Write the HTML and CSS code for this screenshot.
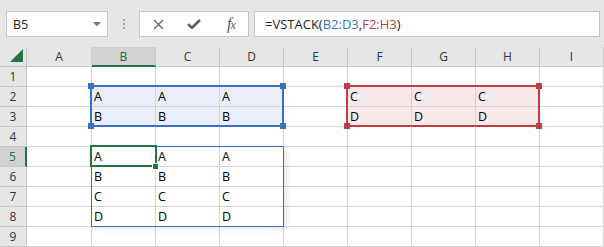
FILE: index.html
```html
<!DOCTYPE html>
<html>
<head>
<meta charset="utf-8">
<link rel="stylesheet" href="styles.css">
</head>
<body>
<div class="toolbar">
  <div class="namebox">
    <span class="nb-text">B5</span>
    <svg class="caret" width="8" height="5" viewBox="0 0 8 5"><path d="M0 0H8L4 4.5Z" fill="#7a7a7a"/></svg>
  </div>
  <div class="sep"><i></i><i></i><i></i></div>
  <div class="fbuttons">
    <span class="fbtn"><svg width="11" height="11" viewBox="0 0 11 11"><path d="M1 1L10 10M10 1L1 10" stroke="#6f6f6f" stroke-width="1.5"/></svg></span>
    <span class="fbtn"><svg width="14" height="10" viewBox="0 0 14 10"><path d="M1 5.2L5 8.8L13 1" stroke="#5e5e5e" stroke-width="2.6" fill="none"/></svg></span>
    <span class="fbtn fx"><i>f</i><i class="x">x</i></span>
  </div>
  <div class="formula">=VSTACK(<span class="rb">B2:D3</span>,<span class="rr">F2:H3</span>)</div>
</div>

<div class="sheet">
  <div class="grid">
    <div class="corner"><svg width="14" height="14" viewBox="0 0 14 14"><path d="M0 13H13V0Z" fill="#217346"/></svg></div>
    <div class="h">A</div><div class="h sel-h">B</div><div class="h">C</div><div class="h">D</div><div class="h">E</div><div class="h">F</div><div class="h">G</div><div class="h">H</div><div class="h">I</div>

    <div class="rh">1</div><div class="c"></div><div class="c"></div><div class="c"></div><div class="c"></div><div class="c"></div><div class="c"></div><div class="c"></div><div class="c"></div><div class="c"></div>

    <div class="rh">2</div><div class="c"></div><div class="c fb">A</div><div class="c fb">A</div><div class="c fb">A</div><div class="c"></div><div class="c fr">C</div><div class="c fr">C</div><div class="c fr">C</div><div class="c"></div>

    <div class="rh">3</div><div class="c"></div><div class="c fb">B</div><div class="c fb">B</div><div class="c fb">B</div><div class="c"></div><div class="c fr">D</div><div class="c fr">D</div><div class="c fr">D</div><div class="c"></div>

    <div class="rh">4</div><div class="c"></div><div class="c"></div><div class="c"></div><div class="c"></div><div class="c"></div><div class="c"></div><div class="c"></div><div class="c"></div><div class="c"></div>

    <div class="rh sel-r">5</div><div class="c"></div><div class="c">A</div><div class="c">A</div><div class="c">A</div><div class="c"></div><div class="c"></div><div class="c"></div><div class="c"></div><div class="c"></div>

    <div class="rh">6</div><div class="c"></div><div class="c">B</div><div class="c">B</div><div class="c">B</div><div class="c"></div><div class="c"></div><div class="c"></div><div class="c"></div><div class="c"></div>

    <div class="rh">7</div><div class="c"></div><div class="c">C</div><div class="c">C</div><div class="c">C</div><div class="c"></div><div class="c"></div><div class="c"></div><div class="c"></div><div class="c"></div>

    <div class="rh">8</div><div class="c"></div><div class="c">D</div><div class="c">D</div><div class="c">D</div><div class="c"></div><div class="c"></div><div class="c"></div><div class="c"></div><div class="c"></div>

    <div class="rh">9</div><div class="c"></div><div class="c"></div><div class="c"></div><div class="c"></div><div class="c"></div><div class="c"></div><div class="c"></div><div class="c"></div><div class="c"></div>
  </div>

  <div class="range range-blue"><i class="hd tl"></i><i class="hd tr"></i><i class="hd bl"></i><i class="hd br"></i></div>
  <div class="range range-red"><i class="hd tl"></i><i class="hd tr"></i><i class="hd bl"></i><i class="hd br"></i></div>
  <div class="spill"></div>
  <div class="active"><i class="handle"></i></div>
</div>
</body>
</html>
```

FILE: styles.css
```css
* { box-sizing: border-box; }
html, body { margin: 0; padding: 0; background: #fff; }
body {
  width: 604px;
  height: 247px;
  overflow: hidden;
  font-family: "Open Sans", "Noto Sans", sans-serif;
}

.toolbar {
  height: 47px;
  background: #e6e6e6;
  display: flex;
  align-items: flex-start;
  padding: 11px 4px 0 6px;
}

.namebox {
  width: 102px;
  height: 26px;
  background: #fff;
  border: 1px solid #c6c6c6;
  display: flex;
  align-items: center;
  justify-content: space-between;
  padding: 0 6px 0 6px;
}
.nb-text { font-size: 12.5px; color: #222; }
.caret { margin-top: 1px; }

.sep {
  width: 31px;
  height: 26px;
  display: flex;
  flex-direction: column;
  align-items: center;
  justify-content: center;
  gap: 2px;
}
.sep i { display: block; width: 2px; height: 2px; background: #a8a8a8; }

.fbuttons {
  width: 110px;
  height: 26px;
  background: #fff;
  border: 1px solid #c6c6c6;
  display: flex;
  align-items: center;
}
.fbtn {
  width: 36px;
  height: 24px;
  display: flex;
  align-items: center;
  justify-content: center;
}
.fbtn svg { display: block; }
.fx {
  font-family: "Liberation Serif", "DejaVu Serif", serif;
  font-style: italic;
  color: #555;
  font-size: 16px;
  padding-left: 3px;
}
.fx i { font-style: italic; }
.fx .x { font-size: 12px; margin-top: 3px; margin-left: -1px; }

.formula {
  flex: 1;
  margin-left: 5px;
  height: 26px;
  background: #fff;
  border: 1px solid #c6c6c6;
  padding-left: 10px;
  font-size: 13px;
  line-height: 24px;
  color: #222;
  white-space: nowrap;
}
.rb { color: #3b6fc6; }
.rr { color: #c43c48; }

.sheet { position: relative; }

.grid {
  display: grid;
  grid-template-columns: 27px 65px repeat(8, 64px);
  grid-auto-rows: 20px;
}

.corner {
  background: #e6e6e6;
  border-right: 1px solid #c8c8c8;
  border-bottom: 1px solid #c8c8c8;
  display: flex;
  align-items: flex-end;
  justify-content: flex-end;
  padding: 0 2px 3px 0;
}
.corner svg { display: block; }

.h {
  background: #e6e6e6;
  border-right: 1px solid #c8c8c8;
  border-bottom: 1px solid #c8c8c8;
  font-size: 12px;
  color: #333;
  text-align: center;
  line-height: 19px;
}
.sel-h {
  background: #d2d2d2;
  color: #1e6b42;
  border-bottom: 2px solid #217346;
}

.rh {
  background: #e6e6e6;
  border-right: 1px solid #c8c8c8;
  border-bottom: 1px solid #c8c8c8;
  font-size: 12px;
  color: #333;
  text-align: center;
  line-height: 19px;
}
.sel-r {
  background: #d2d2d2;
  color: #1e6b42;
  border-right: 2px solid #217346;
}

.c {
  border-right: 1px solid #d4d4d4;
  border-bottom: 1px solid #d4d4d4;
  font-size: 12.5px;
  color: #000;
  line-height: 20px;
  padding-left: 2px;
}
.fb { background: #e9eef8; }
.fr { background: #f7e9e9; }

.range {
  position: absolute;
  width: 194px;
  height: 42px;
  top: 38px;
  border: 2px solid;
}
.range-blue { left: 90px; border-color: #3b6fc6; }
.range-red { left: 346px; border-color: #c23b45; }
.hd {
  position: absolute;
  width: 6px;
  height: 6px;
}
.range-blue .hd { background: #3b6fc6; }
.range-red .hd { background: #c23b45; }
.tl { left: -4px; top: -4px; }
.tr { right: -4px; top: -4px; }
.bl { left: -4px; bottom: -4px; }
.br { right: -4px; bottom: -4px; }

.spill {
  position: absolute;
  left: 91px;
  top: 99px;
  width: 193px;
  height: 81px;
  border: 1px solid #3b6fc6;
  box-shadow: 3px 2px 6px rgba(0, 0, 0, 0.10);
}

.active {
  position: absolute;
  left: 90px;
  top: 98px;
  width: 67px;
  height: 22px;
  border: 2px solid #217346;
}
.handle {
  position: absolute;
  right: -4px;
  bottom: -5px;
  width: 7px;
  height: 7px;
  background: #217346;
  border: 1px solid #fff;
}
```
